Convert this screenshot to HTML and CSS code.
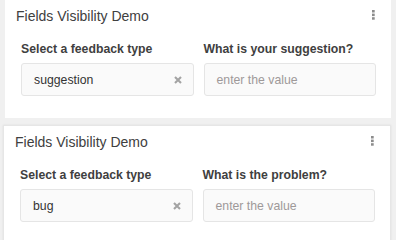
FILE: index.html
```html
<!DOCTYPE html>
<html>
<head>
<meta charset="utf-8">
<link rel="stylesheet" href="styles.css">
</head>
<body>
<div class="page">
  <section class="panel">
    <div class="panel-header">
      <span class="title">Fields Visibility Demo</span>
      <span class="menu"><svg width="3" height="10" viewBox="0 0 3 10"><rect x="0" y="0" width="2.7" height="2.5"/><rect x="0" y="3.6" width="2.7" height="2.5"/><rect x="0" y="7.2" width="2.7" height="2.5"/></svg></span>
    </div>
    <div class="panel-body">
      <div class="field">
        <label class="label">Select a feedback type</label>
        <div class="box select">
          <span class="value">suggestion</span>
          <svg class="clear" width="8" height="8" viewBox="0 0 8 8"><path d="M1 1 L7 7 M7 1 L1 7"/></svg>
        </div>
      </div>
      <div class="field">
        <label class="label">What is your suggestion?</label>
        <div class="box input"><span class="placeholder">enter the value</span></div>
      </div>
    </div>
  </section>
  <section class="panel panel-active">
    <div class="panel-header">
      <span class="title">Fields Visibility Demo</span>
      <span class="menu"><svg width="3" height="10" viewBox="0 0 3 10"><rect x="0" y="0" width="2.7" height="2.5"/><rect x="0" y="3.6" width="2.7" height="2.5"/><rect x="0" y="7.2" width="2.7" height="2.5"/></svg></span>
    </div>
    <div class="panel-body">
      <div class="field">
        <label class="label">Select a feedback type</label>
        <div class="box select">
          <span class="value">bug</span>
          <svg class="clear" width="8" height="8" viewBox="0 0 8 8"><path d="M1 1 L7 7 M7 1 L1 7"/></svg>
        </div>
      </div>
      <div class="field">
        <label class="label">What is the problem?</label>
        <div class="box input"><span class="placeholder">enter the value</span></div>
      </div>
    </div>
  </section>
</div>
</body>
</html>
```
FILE: styles.css
```css
* { box-sizing: border-box; }
html, body {
  margin: 0;
  padding: 0;
  background: #f0f0f0;
  font-family: "Liberation Sans", Arial, sans-serif;
}
.page {
  padding: 0 5px;
}
.panel {
  background: #ffffff;
}
.panel-active {
  margin-top: 7px;
  margin-left: -2px;
  border: 1px solid #e6e6e6;
  box-shadow: 0 0 2px rgba(0, 0, 0, 0.08);
}
.panel-header {
  display: flex;
  justify-content: space-between;
  align-items: flex-start;
  padding: 6px 16px 0 11px;
}
.title {
  font-size: 14px;
  line-height: 20px;
  color: #404040;
}
.menu {
  display: flex;
  margin-top: 4px;
}
.menu svg rect {
  fill: #8c8c8c;
}
.panel-body {
  display: grid;
  grid-template-columns: 1fr 1fr;
  column-gap: 10px;
  padding: 14px 15px 22px 16px;
}
.field {
  display: flex;
  flex-direction: column;
}
.label {
  font-size: 12.25px;
  line-height: 18px;
  font-weight: bold;
  color: #404040;
  margin-bottom: 5px;
}
.box {
  height: 33px;
  border: 1px solid #e5e5e5;
  border-radius: 3px;
  background: #fafafa;
  display: flex;
  align-items: center;
  justify-content: space-between;
  padding: 0 11px 0 12px;
  font-size: 12.25px;
}
.value {
  color: #333333;
}
.placeholder {
  color: #9e9999;
}
.clear path {
  stroke: #a3a3a3;
  stroke-width: 2.1;
  fill: none;
}
```
